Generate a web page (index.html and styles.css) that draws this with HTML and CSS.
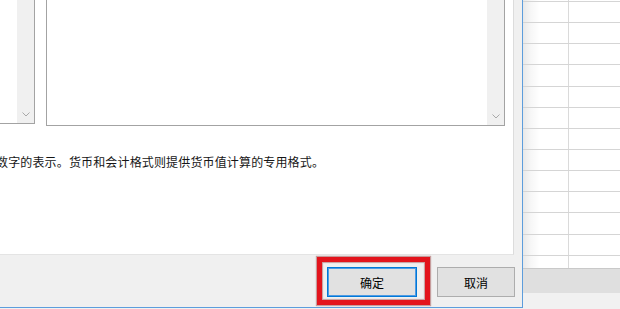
FILE: index.html
```html
<!DOCTYPE html>
<html lang="zh-CN">
<head>
<meta charset="utf-8">
<title>设置单元格格式</title>
<link rel="stylesheet" href="styles.css">
</head>
<body>
<div class="screen">
  <div class="dialog">
    <div class="page">
      <div class="lists">
        <div class="listbox list-left">
          <div class="list-body"></div>
          <div class="vscroll">
            <svg class="chev" width="8" height="5" viewBox="0 0 8 5"><path d="M0.5 0.5 L4 4 L7.5 0.5" fill="none" stroke="#a9a9a9" stroke-width="1"/></svg>
          </div>
        </div>
        <div class="listbox list-right">
          <div class="list-body"></div>
          <div class="vscroll">
            <svg class="chev" width="8" height="5" viewBox="0 0 8 5"><path d="M0.5 0.5 L4 4 L7.5 0.5" fill="none" stroke="#a9a9a9" stroke-width="1"/></svg>
          </div>
        </div>
      </div>
      <p class="desc">数字的表示。货币和会计格式则提供货币值计算的专用格式。</p>
    </div>
    <div class="footer">
      <span class="btn-wrap">
        <button class="btn btn-default">确定</button>
        <span class="highlight"></span>
      </span>
      <button class="btn btn-cancel">取消</button>
    </div>
  </div>
  <div class="sheet">
    <div class="grid">
      <div class="row first"><div class="cell-a"></div><div class="cell-b"></div></div>
      <div class="row"><div class="cell-a"></div><div class="cell-b"></div></div>
      <div class="row"><div class="cell-a"></div><div class="cell-b"></div></div>
      <div class="row"><div class="cell-a"></div><div class="cell-b"></div></div>
      <div class="row"><div class="cell-a"></div><div class="cell-b"></div></div>
      <div class="row"><div class="cell-a"></div><div class="cell-b"></div></div>
      <div class="row"><div class="cell-a"></div><div class="cell-b"></div></div>
      <div class="row"><div class="cell-a"></div><div class="cell-b"></div></div>
      <div class="row"><div class="cell-a"></div><div class="cell-b"></div></div>
      <div class="row"><div class="cell-a"></div><div class="cell-b"></div></div>
      <div class="row"><div class="cell-a"></div><div class="cell-b"></div></div>
      <div class="row"><div class="cell-a"></div><div class="cell-b"></div></div>
      <div class="row"><div class="cell-a"></div><div class="cell-b"></div></div>
      <div class="row"><div class="cell-a"></div><div class="cell-b"></div></div>
    </div>
    <div class="sheet-bar"></div>
  </div>
</div>
</body>
</html>
```

FILE: styles.css
```css
html, body {
  margin: 0;
  padding: 0;
}

body {
  width: 620px;
  height: 309px;
  overflow: hidden;
  background: #f1f1f1;
  font-family: "Noto Sans CJK SC", "Noto Sans", sans-serif;
  font-size: 12px;
  color: #000;
}

.screen {
  display: flex;
  height: 309px;
}

/* ---------- dialog ---------- */
.dialog {
  flex: none;
  width: 522px;
  height: 307px;
  background: #f0f0f0;
  border-right: 1px solid #5d9ddc;
  border-bottom: 1px solid #5d9ddc;
  display: flex;
  flex-direction: column;
}

.page {
  flex: none;
  width: 513px;
  height: 254px;
  background: #fff;
  border-right: 1px solid #dcdcdc;
  border-bottom: 1px solid #e4e4e4;
  overflow: hidden;
}

.lists {
  display: flex;
  align-items: flex-start;
  margin-top: -100px;
}

.listbox {
  display: flex;
  box-sizing: border-box;
  background: #fff;
  border: 1px solid #a3a3a3;
}

.list-left {
  margin-left: -100px;
  width: 135px;
  height: 224px;
}

.list-right {
  margin-left: 11px;
  width: 459px;
  height: 226px;
}

.list-body {
  flex: 1;
}

.vscroll {
  width: 17px;
  background: #f0f0f0;
  display: flex;
  align-items: flex-end;
  justify-content: center;
  padding-bottom: 6px;
  box-sizing: border-box;
}

.chev {
  display: block;
}

.desc {
  margin: 28px 0 0 -4px;
  line-height: 16px;
  white-space: nowrap;
  letter-spacing: 0.15px;
  color: #161616;
}

.footer {
  flex: 1;
  display: flex;
  justify-content: flex-end;
  align-items: flex-start;
  gap: 20px;
  padding: 12px 7px 0 0;
}

.btn {
  box-sizing: border-box;
  height: 30px;
  padding: 0;
  margin: 0;
  background: #e1e1e1;
  border: 1px solid #adadad;
  font-family: inherit;
  font-size: 12px;
  color: #000;
}

.btn-default {
  width: 90px;
  border: 1px solid #0078d7;
  box-shadow: inset 0 0 0 1px #4f9be3;
}

.btn-cancel {
  width: 78px;
}

.btn-wrap {
  position: relative;
  display: flex;
}

.highlight {
  position: absolute;
  left: -10px;
  top: -10px;
  right: -13px;
  bottom: -8px;
  border: 5px solid #e3141c;
  box-shadow: 0 0 1px 1px rgba(120, 0, 0, 0.35), inset 0 0 1px 1px rgba(120, 0, 0, 0.35);
  pointer-events: none;
}

/* ---------- spreadsheet behind ---------- */
.sheet {
  flex: 1;
  display: flex;
  flex-direction: column;
}

.grid {
  height: 268px;
  overflow: hidden;
  background: linear-gradient(to right, rgba(0, 0, 0, 0.09) 0, rgba(0, 0, 0, 0.03) 8px, rgba(0, 0, 0, 0) 17px), #fff;
}

.row {
  display: flex;
  box-sizing: border-box;
  height: 21.15px;
  border-bottom: 1px solid #d5d5d5;
}

.row.first {
  margin-top: -19.15px;
}

.cell-a {
  box-sizing: border-box;
  width: 46px;
  border-right: 1px solid #dadada;
}

.cell-b {
  flex: 1;
}

.sheet-bar {
  height: 24px;
  background: #dfdfdf;
  border-top: 1px solid #c9c9c9;
}
```
